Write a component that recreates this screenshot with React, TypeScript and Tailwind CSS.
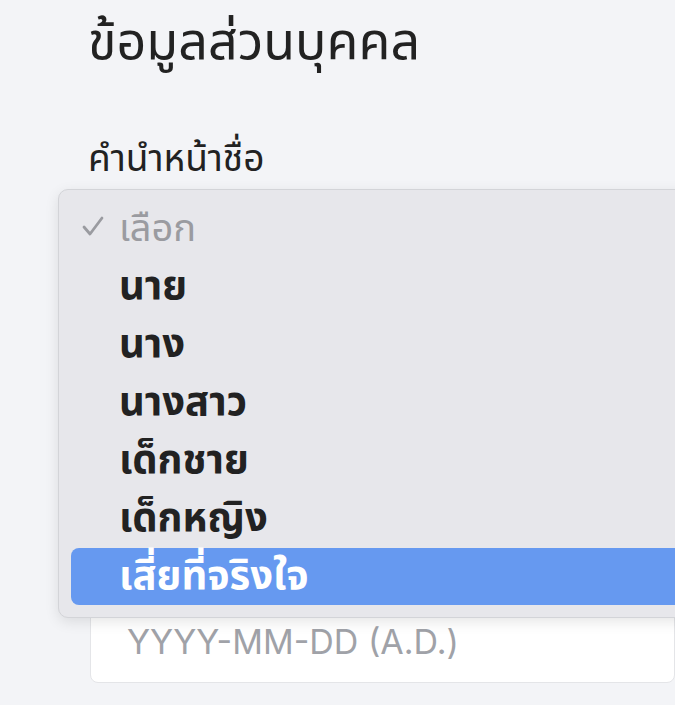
const options = ["นาย", "นาง", "นางสาว", "เด็กชาย", "เด็กหญิง"];

export default function App() {
  return (
    <div
      className="relative h-[705px] w-[675px] overflow-hidden bg-[#f3f4f7] text-[#1d1d1f]"
      style={{ fontFamily: '"Noto Sans", "Noto Sans Thai", "Liberation Sans", sans-serif' }}
    >
      <div className="flex flex-col pl-[88px]">
        <h1 className="mt-[4px] text-[52px] leading-[70px] font-normal text-[#222]">ข้อมูลส่วนบุคคล</h1>
        <label className="mt-[58px] text-[37px] leading-[50px] text-[#222]">คำนำหน้าชื่อ</label>
        {/* select field sits under the open menu */}
        <div className="mt-[10px] ml-[2px] h-[58px] rounded-[8px] border border-[#d6d7db] bg-white" />
        <div className="h-[345px]" />
        <div className="ml-[2px] flex h-[88px] items-end rounded-[8px] border border-[#e4e5e8] bg-white pb-[20px] pl-[36px]">
          <span className="text-[34px] leading-[40px] text-[#a0a2a8]" style={{ fontFamily: '"Inter", "Liberation Sans", sans-serif' }}>
            YYYY-MM-DD (A.D.)
          </span>
        </div>
      </div>

      {/* open dropdown menu */}
      <div className="absolute top-[189px] left-[58px] h-[429px] w-[660px] rounded-[10px] border border-[#d3d4d8] bg-[#e7e7eb] pt-[10px] pl-[12px] shadow-[0_4px_14px_rgba(0,0,0,0.10)]">
        <div className="flex h-[58px] items-center pb-[6px] pl-[10px] text-[#9a9ba0]">
          <svg width="24" height="22" viewBox="0 0 24 22" fill="none" stroke="#9a9ba0" strokeWidth="2.8" strokeLinecap="round" strokeLinejoin="round">
            <path d="M3 12 L9 19 L21 3" />
          </svg>
          <span className="ml-[14px] text-[38px] leading-[50px]">เลือก</span>
        </div>
        {options.map((o) => (
          <div key={o} className="flex h-[58px] items-center pb-[6px] pl-[48px] text-[40px] leading-[50px] font-bold text-[#222]">
            {o}
          </div>
        ))}
        <div className="flex h-[57px] items-center rounded-[8px] bg-[#6699f0] pb-[6px] pl-[48px] text-[40px] leading-[50px] font-bold text-white">
          เสี่ยที่จริงใจ
        </div>
      </div>
    </div>
  );
}
